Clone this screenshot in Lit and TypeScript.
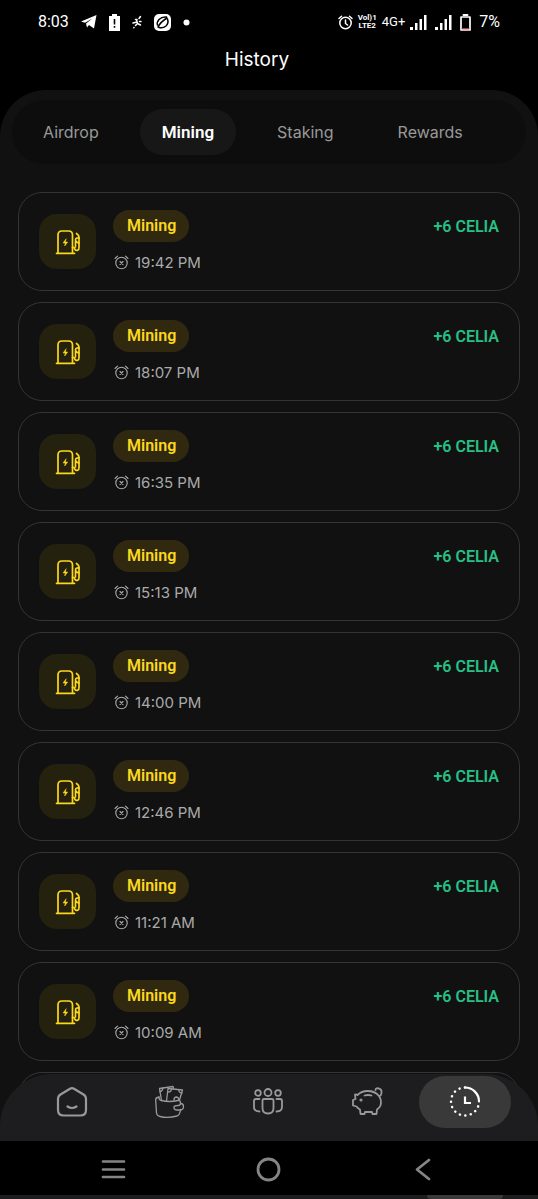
import { LitElement, html, css, svg } from "lit";
import { customElement, property, state } from "lit/decorators.js";
import { classMap } from "lit/directives/class-map.js";

const TABS = ["Airdrop", "Mining", "Staking", "Rewards"];
const TIMES = ["19:42 PM", "18:07 PM", "16:35 PM", "15:13 PM", "14:00 PM", "12:46 PM", "11:21 AM", "10:09 AM", "08:51 AM"];

const navIcons = [
  { name: "Home", art: svg`<g stroke-width="2.2"><path d="M16 3.2 Q17 3.2 18 3.8 L27.5 9.5 Q30 11 30 14 V25 Q30 30.5 24.5 30.5 H7.5 Q2 30.5 2 25 V14 Q2 11 4.5 9.5 L14 3.8 Q15 3.2 16 3.2Z"/><path d="M11.5 21.5 Q16 24.5 20.5 21.5"/></g>` },
  { name: "Wallet", art: svg`<g stroke-width="1.3"><path d="M5 12 Q1.500 12.500 1.700 15 L2.500 28 Q3 31 6 31.500 Q14 33.500 23 31 Q26 30 26.500 24.500"/><path d="M5 12 Q4.500 15 7.500 15.500 Q15 17.500 24 15.500 Q26.500 15 26.500 18.500"/><path d="M7.500 15.500 L5.500 3.500 L19 1.500 L19.500 3.500"/><path d="M12.500 16 L14 3.500 L28.500 5 L25.500 15"/><path d="M6 6.500 Q8.800 6 8.800 3M14 7 Q17.500 7 17.500 4M28 8 Q24.500 8 25 4.700M20 15 Q20 12 22.500 12 Q25 12.500 24.500 15"/><path d="M26.500 18.500 Q29.500 18.500 29.500 21.500 Q29.500 25 26 25 H22.500 Q19.500 24.500 20 22 Q20.500 20.500 24 20.500 Q26.500 20.500 26.500 18.500Z"/></g>` },
  { name: "Team", art: svg`<g stroke-width="1.8"><circle cx="16" cy="7.500" r="3.500"/><circle cx="6" cy="8" r="2.800"/><circle cx="26" cy="8" r="2.800"/><path d="M12 14 H20 Q21.500 14 21.500 15.500 V23 Q21.500 28.500 16 28.500 Q10.500 28.500 10.500 23 V15.500 Q10.500 14 12 14Z"/><path d="M7.500 14 H4 Q2 14 2 16 V22 Q2 26.500 7.500 26.500M24.500 14 H28 Q30 14 30 16 V22 Q30 26.500 24.500 26.500"/></g>` },
  { name: "Savings", art: svg`<g stroke-width="1.8"><path d="M6.500 10 Q10.500 6 16.500 6 Q24 6 28 11 Q31 15.500 29.500 20.500 Q28.500 23 26 24.500 L25.500 29 H21.500 L21 27 H14 L13.500 29 H9.500 L9 24.500 Q7 23.500 5.500 21.500 L2 20.500 V15 L4.500 14 L4 9.500 Q5.500 9 6.500 10Z"/><path d="M13.500 10.500 Q17 9.500 20.500 10.500M24.500 5 Q24.500 3 27.500 3.300 Q31 4 30.500 8 Q30.300 10.500 28.500 11"/><circle cx="10" cy="15" r=".7"/></g>` },
  { name: "History", art: svg`<g stroke-width="2.2"><path d="M16 2.500 A14 14 0 0 1 30 16.500"/><path d="M16 2.500 A14 14 0 1 0 30 16.500" stroke-dasharray=".1 5.400" stroke-width="2.500"/><path d="M16 11.500 V18 H22" stroke-linecap="butt" stroke-linejoin="miter"/></g>` },
];

@customElement("history-entry")
export class HistoryEntry extends LitElement {
  @property() time = "";

  static styles = css`
    :host { display: block; }
    .card {
      box-sizing: border-box; display: flex; align-items: flex-start;
      height: 99px; padding: 17px 20px 0;
      border: 1px solid #343434; border-radius: 24px;
    }
    .tile {
      display: grid; place-items: center; width: 57px; height: 55px;
      margin: 4px 17px 0 0; border-radius: 18px; background: #25210f;
    }
    .info { flex: 1; }
    .badge {
      display: block; width: fit-content; padding: 0 13px 0 14px; border-radius: 16px;
      background: #30280f; color: #fbd81f;
      font: 600 16px/32px Roboto, sans-serif;
    }
    .time {
      display: flex; align-items: center; gap: 6px; margin-top: 9px; padding-left: 1px;
      color: #aaa; font: 400 15px/24px Inter, sans-serif;
    }
    .amount { color: #27c086; font: 600 16px/34px Roboto, sans-serif; }
    svg { display: block; fill: none; stroke: currentColor; stroke-linecap: round; stroke-linejoin: round; }
    .pump { color: #fbd81f; }
  `;

  render() {
    return html`
      <article class="card">
        <div class="tile">
          <svg class="pump" width="26" height="26" viewBox="0 0 26 26" stroke-width="1.700" aria-hidden="true">
            <path d="M3 24 V6 Q3 2 7 2 H13.500 Q17.500 2 17.500 6 V24M1.500 24.300 H19.500"/>
            <path d="M17.500 18.500 Q19.500 18 20 20.500 Q21 22 23 21 Q24 20.500 24 18.500 V8 Q24 6.500 21.500 4.500"/>
            <path d="M24 9 Q20.500 8.500 20.500 11 Q20.500 13 24 14 M20.500 12 V18"/>
            <path d="M11 10 L8 14 H10.200 L9.700 17 L12.700 13 H10.500Z" fill="currentColor" stroke-width=".5"/>
          </svg>
        </div>
        <div class="info">
          <span class="badge">Mining</span>
          <div class="time">
            <svg width="15" height="16" viewBox="0 0 15 16" stroke-width="1.100" aria-hidden="true">
              <circle cx="7.500" cy="8" r="5.700"/>
              <path d="M1 3.500 L3.500 1.200M14 3.500 L11.500 1.200M6 6.500 L9 9.500M9 6.500 L6 9.500"/>
            </svg>
            <time>${this.time}</time>
          </div>
        </div>
        <span class="amount">+6 CELIA</span>
      </article>
    `;
  }
}

@customElement("app-root")
export class AppRoot extends LitElement {
  @state() private tab = "Mining";
  @state() private section = "History";

  static styles = css`
    :host {
      display: flex; flex-direction: column; height: 100vh; overflow: hidden;
      background: #000; color: #fff; font-family: Inter, sans-serif;
    }
    svg { display: block; fill: none; stroke: currentColor; stroke-linecap: round; stroke-linejoin: round; }
    button { border: 0; margin: 0; padding: 0; background: none; color: inherit; cursor: pointer; }
    .status {
      display: flex; align-items: center; justify-content: space-between;
      padding: 10px 38px 0; font: 400 16px/24px Roboto, sans-serif;
    }
    .cluster { display: flex; align-items: center; }
    .left { gap: 12px; }
    .right { gap: 8px; }
    .radio { display: flex; align-items: center; gap: 5px; }
    .volte { font: 700 8px/8px Roboto, sans-serif; text-align: center; }
    .network { font-size: 13px; }
    .solid { fill: currentColor; stroke: none; }
    .title { margin: 0; padding: 12px 24px 16px 0; text-align: center; font-weight: 400; font-size: 19px; line-height: 28px; }
    .panel {
      flex: 1; min-height: 0; display: flex; flex-direction: column;
      padding-top: 10px; border-radius: 46px 46px 0 0; background: #111;
    }
    .tabs {
      display: flex; align-items: center; gap: 18px;
      margin: 0 12px; padding: 9px 8px; border-radius: 32px; background: #0d0d0d;
    }
    .tab {
      height: 46px; padding: 0 23px; border-radius: 23px;
      color: #999; font: 400 16px/46px Inter, sans-serif;
    }
    .tab.active { padding: 0 22px; background: #171717; color: #fff; font: 600 17px/46px Roboto, sans-serif; }
    .list {
      flex: 1; min-height: 0; overflow-y: auto; scrollbar-width: none;
      display: flex; flex-direction: column; gap: 11px; margin-top: 28px; padding: 0 18px;
    }
    .list history-entry { flex: none; }
    .nav {
      position: relative; display: grid; grid-template-columns: repeat(5, 1fr); justify-items: center;
      box-sizing: border-box; height: 67px; margin-top: -67px; padding: 2px 24px 0 23px;
      border-radius: 52px 52px 0 0; background: #1d1d1f; color: #999;
    }
    .item { display: grid; place-items: center; width: 92px; height: 52px; border-radius: 26px; }
    .item.active { background: #393939; color: #fff; }
    .system {
      display: flex; align-items: center; justify-content: space-between;
      padding: 16px 102px 13px 101px; color: #858585;
    }
    .edge { height: 4px; padding: 0 35px; background: #1d1d1f; display: flex; justify-content: flex-end; }
    .peek { width: 76px; border-radius: 0 0 20px 20px; background: #393939; }
  `;

  render() {
    return html`
      <div class="status">
        <div class="cluster left">
          <span>8:03</span>
          <svg class="solid" width="16" height="14" viewBox="0 0 16 14"><path d="M0 6.500 L15.500 0 L13 13.500 L8 10 L6 12.500 L5 8.500 L11.500 3.500 L4 7.800Z"/></svg>
          <svg class="solid" width="11" height="17" viewBox="0 0 11 17"><path fill-rule="evenodd" d="M3 0 H8 V2 H11 V17 H0 V2 H3Z M4.700 5 V10.500 H6.300 V5Z M4.700 12 V13.700 H6.300 V12Z"/></svg>
          <svg width="10" height="14" viewBox="0 0 10 14" stroke-width="1.500"><path d="M8.500 1.500 L7 3.500M5 4.500 H3.500M4.500 4.500 L5.500 8.500 L3.500 10.500M2 12.500 L1.800 12.700M1 8 L5 7M5.500 8.500 L8.500 10M7.500 6.500 H9"/></svg>
          <svg width="17" height="17" viewBox="0 0 17 17"><rect class="solid" width="17" height="17" rx="5"/><g stroke="#000" stroke-width="1.500"><path d="M12.500 3 Q8 2.500 5 5.500 Q2.500 8.500 3.500 11M13.500 5 Q15 9 12 12 Q9 14.500 5 13.500M4 13 Q6.500 8 13 4"/></g></svg>
          <svg class="solid" width="7" height="7" viewBox="0 0 7 7"><circle cx="3.500" cy="3.500" r="3"/></svg>
        </div>
        <div class="cluster right">
          <div class="radio">
            <svg width="15" height="15" viewBox="0 0 15 15" stroke-width="1.500"><circle cx="7.500" cy="8" r="5.700"/><path d="M1 3.500 L3.500 1.200M14 3.500 L11.500 1.200M7.500 5 V8.500 L9.500 10"/></svg>
            <span class="volte">Vol)1<br />LTE2</span>
            <span class="network">4G+</span>
            <svg class="solid" width="17" height="15" viewBox="0 0 17 15"><path d="M0 12 H3 V15 H0Z M5 8 H7.500 V15 H5Z M9.500 4 H12 V15 H9.500Z M14 0 H16.500 V15 H14Z"/></svg>
          </div>
          <svg class="solid" width="17" height="15" viewBox="0 0 17 15"><path d="M0 12 H3 V15 H0Z M5 8 H7.500 V15 H5Z M9.500 4 H12 V15 H9.500Z M14 0 H16.500 V15 H14Z"/></svg>
          <svg width="11" height="17" viewBox="0 0 11 17"><path stroke-width="1.700" d="M1 3 H10 V16 H1Z"/><path d="M3.500 1 H7.500" stroke-width="2"/><path d="M2 14.500 H9" stroke="#c33" stroke-width="1"/></svg>
          <span>7%</span>
        </div>
      </div>
      <h1 class="title">History</h1>
      <main class="panel">
        <div class="tabs" role="tablist">
          ${TABS.map((t) => html`<button role="tab" aria-selected=${t === this.tab} class=${classMap({ tab: true, active: t === this.tab })} @click=${() => (this.tab = t)}>${t}</button>`)}
        </div>
        <div class="list">${TIMES.map((t) => html`<history-entry .time=${t}></history-entry>`)}</div>
      </main>
      <nav class="nav">
        ${navIcons.map((n) => html`<button aria-label=${n.name} class=${classMap({ item: true, active: n.name === this.section })} @click=${() => (this.section = n.name)}><svg width="32" height="34" viewBox="0 0 32 34">${n.art}</svg></button>`)}
      </nav>
      <div class="system">
        <button aria-label="Recent apps"><svg width="25" height="25" viewBox="0 0 25 25" stroke-width="2.700"><path d="M2 4.500 H23M2 12.500 H23M2 20 H23"/></svg></button>
        <button aria-label="Home screen"><svg width="25" height="25" viewBox="0 0 25 25" stroke-width="2.800"><circle cx="12.500" cy="12.500" r="10.500"/></svg></button>
        <button aria-label="Back"><svg width="25" height="25" viewBox="0 0 25 25" stroke-width="2.800"><path d="M18 3 L6 12.500 L18 22"/></svg></button>
      </div>
      <div class="edge"><div class="peek"></div></div>
    `;
  }
}
